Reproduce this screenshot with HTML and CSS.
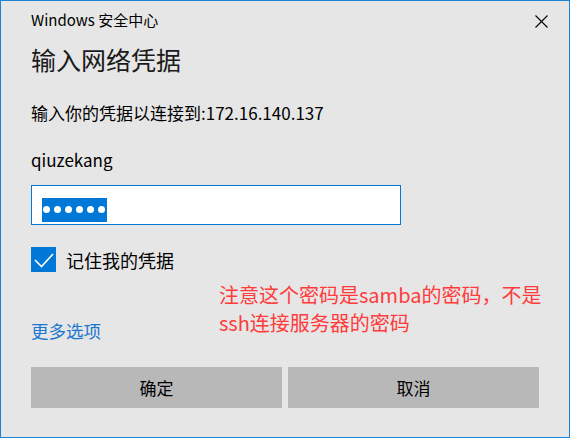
FILE: index.html
```html
<!DOCTYPE html>
<html lang="zh-CN">
<head>
<meta charset="utf-8">
<title>Windows 安全中心</title>
<link rel="stylesheet" href="styles.css">
</head>
<body>
<div class="dialog">
  <div class="titlebar">
    <span class="app-title">Windows 安全中心</span>
    <svg class="close" width="13" height="13" viewBox="0 0 13 13" aria-hidden="true">
      <path d="M0.5 0.5 L12.5 12.5 M12.5 0.5 L0.5 12.5" stroke="#000" stroke-width="1.1" fill="none"/>
    </svg>
  </div>
  <h1 class="heading">输入网络凭据</h1>
  <p class="prompt">输入你的凭据以连接到:172.16.140.137</p>
  <p class="user">qiuzekang</p>
  <div class="field">
    <span class="selection"><i class="dot"></i><i class="dot"></i><i class="dot"></i><i class="dot"></i><i class="dot"></i><i class="dot"></i></span>
  </div>
  <div class="remember">
    <span class="checkbox">
      <svg width="25" height="25" viewBox="0 0 25 25" aria-hidden="true">
        <path d="M4 13 L10.5 19.5 L22 7" stroke="#fff" stroke-width="1.6" fill="none"/>
      </svg>
    </span>
    <span class="remember-label">记住我的凭据</span>
  </div>
  <a class="more">更多选项</a>
  <div class="buttons">
    <button class="btn">确定</button>
    <button class="btn">取消</button>
  </div>
  <div class="note">注意这个密码是samba的密码，不是<br>ssh连接服务器的密码</div>
</div>
</body>
</html>
```

FILE: styles.css
```css
* { box-sizing: border-box; }
html, body { margin: 0; padding: 0; }
body {
  font-family: "Noto Sans CJK SC", "Noto Sans", sans-serif;
  background: #e6e6e6;
}
.dialog {
  position: relative;
  width: 570px;
  height: 438px;
  border: 1px solid #1883d7;
  background: #e6e6e6;
  padding: 0 30px;
  color: #000;
}
.titlebar {
  display: flex;
  justify-content: space-between;
  align-items: center;
  margin-right: -9px;
  padding-top: 9px;
  height: 29px;
  line-height: 20px;
}
.app-title {
  font-size: 15px;
}
.close {
  display: block;
  margin-top: 3px;
}
.heading {
  margin: 12px 0 0;
  font-size: 25px;
  font-weight: normal;
  line-height: 35px;
  color: #1a1a1a;
}
.prompt {
  margin: 24px 0 0;
  font-size: 17px;
  line-height: 24px;
}
.user {
  margin: 23px 0 0;
  font-size: 17px;
  line-height: 24px;
}
.field {
  margin-top: 13px;
  width: 370px;
  height: 40px;
  border: 1px solid #0078d7;
  background: #fff;
  padding: 8px 0 0 10px;
}
.selection {
  display: inline-flex;
  align-items: center;
  gap: 4px;
  height: 24px;
  padding: 0 2px 0 1px;
  background: #0078d7;
}
.dot {
  display: block;
  width: 7px;
  height: 7px;
  border-radius: 50%;
  background: #fff;
}
.remember {
  display: flex;
  align-items: center;
  margin-top: 22px;
  height: 25px;
}
.checkbox {
  display: block;
  width: 25px;
  height: 25px;
  background: #0078d7;
}
.checkbox svg { display: block; }
.remember-label {
  margin-left: 10px;
  font-size: 18px;
  line-height: 24px;
}
.more {
  display: block;
  margin-top: 47px;
  font-size: 17.5px;
  line-height: 24px;
  color: #1b78d0;
  width: max-content;
}
.buttons {
  display: grid;
  grid-template-columns: 1fr 1fr;
  gap: 6px;
  margin-top: 24px;
}
.btn {
  height: 41px;
  border: none;
  background: #b8b8b8;
  font-family: inherit;
  font-size: 17px;
  color: #000;
  padding: 0;
}
.note {
  position: absolute;
  left: 218px;
  top: 280px;
  font-size: 20px;
  line-height: 27.5px;
  color: #ff3b3b;
}
```
